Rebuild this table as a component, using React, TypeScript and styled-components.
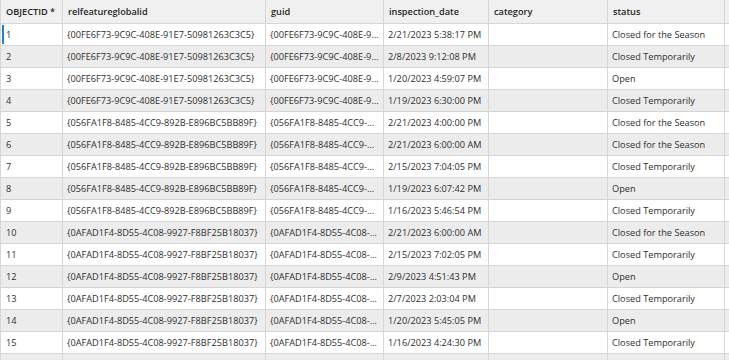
import * as React from "react";
import styled, { createGlobalStyle } from "styled-components";

const GlobalStyle = createGlobalStyle`
  html, body {
    margin: 0;
    padding: 0;
    background: #ffffff;
  }
  body {
    font-family: "Open Sans", "Noto Sans", sans-serif;
  }
`;

interface Inspection {
  objectId: number;
  relGlobalId: string;
  guid: string;
  inspectionDate: string;
  category: string;
  status: string;
}

const GUID_A = "{00FE6F73-9C9C-408E-91E7-50981263C3C5}";
const GUID_B = "{056FA1F8-8485-4CC9-892B-E896BC5BB89F}";
const GUID_C = "{0AFAD1F4-8D55-4C08-9927-F8BF25B18037}";

const rows: Inspection[] = [
  [GUID_A, "2/21/2023 5:38:17 PM", "Closed for the Season"],
  [GUID_A, "2/8/2023 9:12:08 PM", "Closed Temporarily"],
  [GUID_A, "1/20/2023 4:59:07 PM", "Open"],
  [GUID_A, "1/19/2023 6:30:00 PM", "Closed Temporarily"],
  [GUID_B, "2/21/2023 4:00:00 PM", "Closed for the Season"],
  [GUID_B, "2/21/2023 6:00:00 AM", "Closed for the Season"],
  [GUID_B, "2/15/2023 7:04:05 PM", "Closed Temporarily"],
  [GUID_B, "1/19/2023 6:07:42 PM", "Open"],
  [GUID_B, "1/16/2023 5:46:54 PM", "Closed Temporarily"],
  [GUID_C, "2/21/2023 6:00:00 AM", "Closed for the Season"],
  [GUID_C, "2/15/2023 7:02:05 PM", "Closed Temporarily"],
  [GUID_C, "2/9/2023 4:51:43 PM", "Open"],
  [GUID_C, "2/7/2023 2:03:04 PM", "Closed Temporarily"],
  [GUID_C, "1/20/2023 5:45:05 PM", "Open"],
  [GUID_C, "1/16/2023 4:24:30 PM", "Closed Temporarily"],
].map(([id, date, status], index) => ({
  objectId: index + 1,
  relGlobalId: id,
  guid: id,
  inspectionDate: date,
  category: "",
  status,
}));

const columns = [
  { key: "objectId", title: "OBJECTID *", width: 62 },
  { key: "relGlobalId", title: "relfeatureglobalid", width: 203 },
  { key: "guid", title: "guid", width: 118 },
  { key: "inspectionDate", title: "inspection_date", width: 105 },
  { key: "category", title: "category", width: 119 },
  { key: "status", title: "status", width: 117 },
  { key: "extra", title: "", width: 120 },
];

const Viewport = styled.div`
  width: 729px;
  height: 360px;
  overflow: hidden;
  background: #ffffff;
`;

const Grid = styled.table`
  border-collapse: collapse;
  table-layout: fixed;
  width: 844px;
  font-size: 9.2px;
  color: #2e2e2e;
`;

const HeaderCell = styled.th`
  height: 23px;
  padding: 0 5px;
  background: #f0f0f0;
  border-right: 1px solid #d6d6d6;
  border-bottom: 1px solid #d6d6d6;
  text-align: left;
  font-weight: 600;
  color: #262626;
  white-space: nowrap;
  overflow: hidden;
  &:first-child {
    border-left: 1px solid #d6d6d6;
  }
`;

const Row = styled.tr<{ $striped: boolean }>`
  background: ${(p) => (p.$striped ? "#ececec" : "#ffffff")};
`;

const Cell = styled.td<{ $current?: boolean }>`
  position: relative;
  height: 21px;
  padding: 0 4px;
  border-right: 1px solid #d6d6d6;
  border-bottom: 1px solid #d6d6d6;
  white-space: nowrap;
  overflow: hidden;
  text-overflow: ellipsis;
  &:first-child {
    border-left: 1px solid #d6d6d6;
    padding-left: 5px;
  }
  ${(p) =>
    p.$current &&
    `
    &::before {
      content: "";
      position: absolute;
      left: 1px;
      top: 1px;
      bottom: 1px;
      width: 2px;
      background: #1f7fd0;
    }
  `}
`;

const App: React.FC = () => {
  return (
    <Viewport>
      <GlobalStyle />
      <Grid>
        <colgroup>
          {columns.map((col) => (
            <col key={col.key} style={{ width: col.width }} />
          ))}
        </colgroup>
        <thead>
          <tr>
            {columns.map((col) => (
              <HeaderCell key={col.key}>{col.title}</HeaderCell>
            ))}
          </tr>
        </thead>
        <tbody>
          {rows.map((row, index) => (
            <Row key={row.objectId} $striped={index % 2 === 1}>
              <Cell $current={index === 0}>{row.objectId}</Cell>
              <Cell>{row.relGlobalId}</Cell>
              <Cell>{row.guid}</Cell>
              <Cell>{row.inspectionDate}</Cell>
              <Cell>{row.category}</Cell>
              <Cell>{row.status}</Cell>
              <Cell />
            </Row>
          ))}
          <Row $striped>
            {columns.map((col) => (
              <Cell key={col.key} />
            ))}
          </Row>
        </tbody>
      </Grid>
    </Viewport>
  );
};

export default App;
